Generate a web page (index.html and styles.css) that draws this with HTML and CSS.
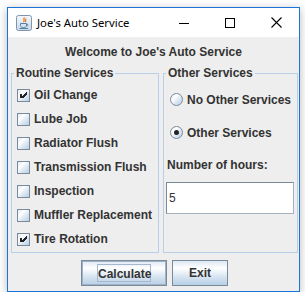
FILE: index.html
```html
<!DOCTYPE html>
<html lang="en">
<head>
    <meta charset="UTF-8">
    <title>Joe's Auto Service</title>
    <link rel="stylesheet" href="styles.css">
</head>
<body>
    <div class="window">
        <!-- Title bar -->
        <div class="titlebar">
            <svg class="app-icon" width="16" height="16" viewBox="0 0 16 16">
                <defs>
                    <linearGradient id="ig" x1="0" y1="0" x2="0" y2="1">
                        <stop offset="0" stop-color="#f4f8fc"/>
                        <stop offset="1" stop-color="#c9d8e8"/>
                    </linearGradient>
                </defs>
                <rect x="0.5" y="0.5" width="15" height="15" rx="2" fill="url(#ig)" stroke="#7f94ad"/>
                <path d="M8.5 2.5 C6.5 4 9.5 5 7.5 7 M10 3.5 C9 5 10.5 5.5 9.3 7" fill="none" stroke="#e76f00" stroke-width="1.1"/>
                <path d="M4.5 8.5 H10.5 V10.5 C10.5 12 9 12.5 7.5 12.5 C6 12.5 4.5 12 4.5 10.5 Z" fill="none" stroke="#5382a1" stroke-width="1"/>
                <path d="M10.5 9 C12.5 9 12.5 11 10.5 11" fill="none" stroke="#5382a1" stroke-width="0.9"/>
                <path d="M3.5 13.5 H12" stroke="#5382a1" stroke-width="1"/>
            </svg>
            <span class="title">Joe's Auto Service</span>
            <div class="caption-buttons">
                <div class="caption-btn">
                    <svg width="10" height="10" viewBox="0 0 10 10"><path d="M0 5.5 H10" stroke="#000" stroke-width="1"/></svg>
                </div>
                <div class="caption-btn">
                    <svg width="10" height="10" viewBox="0 0 10 10"><rect x="0.5" y="0.5" width="9" height="9" fill="none" stroke="#000" stroke-width="1"/></svg>
                </div>
                <div class="caption-btn">
                    <svg width="11" height="11" viewBox="0 0 11 11"><path d="M0.5 0.5 L10.5 10.5 M10.5 0.5 L0.5 10.5" stroke="#000" stroke-width="1.1"/></svg>
                </div>
            </div>
        </div>

        <!-- Frame content -->
        <div class="content">
            <div class="welcome">Welcome to Joe's Auto Service</div>

            <div class="panels">
                <fieldset class="group routine">
                    <legend>Routine Services</legend>
                    <div class="check-list">
                        <div class="check-row"><span class="box checked"><svg width="11" height="11" viewBox="0 0 11 11" shape-rendering="crispEdges"><rect x="2" y="4" width="2" height="4" fill="#222"/><polygon points="8,2 9,2 9,4 5,8 4,8 4,6" fill="#222"/></svg></span>Oil Change</div>
                        <div class="check-row"><span class="box"></span>Lube Job</div>
                        <div class="check-row"><span class="box"></span>Radiator Flush</div>
                        <div class="check-row"><span class="box"></span>Transmission Flush</div>
                        <div class="check-row"><span class="box"></span>Inspection</div>
                        <div class="check-row"><span class="box"></span>Muffler Replacement</div>
                        <div class="check-row"><span class="box checked"><svg width="11" height="11" viewBox="0 0 11 11" shape-rendering="crispEdges"><rect x="2" y="4" width="2" height="4" fill="#222"/><polygon points="8,2 9,2 9,4 5,8 4,8 4,6" fill="#222"/></svg></span>Tire Rotation</div>
                    </div>
                </fieldset>

                <fieldset class="group other">
                    <legend>Other Services</legend>
                    <div class="other-list">
                        <div class="radio-row"><span class="radio"></span>No Other Services</div>
                        <div class="radio-row"><span class="radio selected"></span>Other Services</div>
                        <div class="hours-label">Number of hours:</div>
                        <div class="field-row"><div class="text-field">5</div></div>
                    </div>
                </fieldset>
            </div>

            <div class="buttons">
                <button class="btn btn-calc"><span class="focus-ring">Calculate</span></button>
                <button class="btn btn-exit">Exit</button>
            </div>
        </div>
    </div>
</body>
</html>
```

FILE: styles.css
```css
body {
    margin: 0;
    background-color: #ffffff;
    font-family: "Liberation Sans", Arial, sans-serif;
}

/* Window frame */
.window {
    margin: 7px 0 0 7px;
    width: 293px;
    height: 285px;
    box-sizing: border-box;
    border: 1px solid #1c74d8;
    box-shadow: 0 2px 9px rgba(0, 0, 0, 0.28);
    display: flex;
    flex-direction: column;
    background-color: #eeeeee;
}

.titlebar {
    height: 29px;
    background-color: #ffffff;
    display: flex;
    align-items: center;
}

.app-icon {
    margin-left: 8px;
    margin-top: 1px;
}

.title {
    margin-left: 5px;
    font-family: "Noto Sans", sans-serif;
    font-size: 11.3px;
    color: #000000;
    flex: 1;
}

.caption-buttons {
    display: flex;
    height: 29px;
}

.caption-btn {
    width: 46px;
    height: 29px;
    display: flex;
    align-items: center;
    justify-content: center;
}

.caption-btn svg {
    display: block;
}

/* Swing content pane (Metal / Ocean) */
.content {
    flex: 1;
    display: flex;
    flex-direction: column;
    font-size: 12px;
    font-weight: bold;
    color: #333333;
}

.welcome {
    padding-top: 8px;
    line-height: 14px;
    text-align: center;
}

.panels {
    display: flex;
    margin-top: 7px;
    padding-left: 3px;
    gap: 4px;
}

.group {
    margin: 0;
    padding: 0;
    border: 1px solid #b8cfe5;
    height: 187px;
    box-sizing: border-box;
    min-width: 0;
}

.group legend {
    margin-left: 2px;
    padding: 0 2px;
    line-height: 14px;
}

.routine {
    width: 148px;
}

.other {
    width: 135px;
}

.check-list {
    padding: 3px 0 0 5px;
}

.check-row {
    height: 24px;
    line-height: 24px;
    display: flex;
    white-space: nowrap;
}

.box {
    width: 13px;
    height: 13px;
    box-sizing: border-box;
    margin-top: 6px;
    margin-right: 4px;
    border: 1px solid #7a8a99;
    background: linear-gradient(135deg, #dde8f3 0%, #ffffff 30%, #dde8f3 60%, #b8cfe5 100%);
}

.box svg {
    display: block;
}

.other-list {
    padding: 3px 0 0 2px;
}

.radio-row {
    height: 33px;
    display: flex;
    align-items: center;
    padding-left: 4px;
    white-space: nowrap;
}

.radio {
    width: 13px;
    height: 13px;
    box-sizing: border-box;
    margin-right: 4px;
    border: 1px solid #7a8a99;
    border-radius: 50%;
    background: linear-gradient(135deg, #dde8f3 0%, #ffffff 30%, #dde8f3 60%, #b8cfe5 100%);
    display: flex;
    align-items: center;
    justify-content: center;
}

.radio.selected::after {
    content: "";
    width: 5px;
    height: 5px;
    border-radius: 50%;
    background-color: #222222;
}

.hours-label {
    height: 33px;
    line-height: 33px;
    padding-left: 1px;
}

.field-row {
    height: 33px;
}

.text-field {
    width: 128px;
    height: 32px;
    box-sizing: border-box;
    border: 1px solid #7a8a99;
    border-right-color: #a6b2bd;
    border-bottom-color: #a6b2bd;
    background-color: #ffffff;
    font-weight: normal;
    line-height: 30px;
    padding-left: 2px;
    color: #333333;
}

/* Bottom buttons */
.buttons {
    display: flex;
    justify-content: center;
    gap: 5px;
    margin-top: 7px;
    padding-left: 2px;
}

.btn {
    height: 26px;
    box-sizing: border-box;
    border: 1px solid #7a8a99;
    padding: 0;
    font-family: "Liberation Sans", Arial, sans-serif;
    font-size: 12px;
    font-weight: bold;
    color: #333333;
    background: linear-gradient(#dde8f3 0%, #ffffff 30%, #dde8f3 60%, #b8cfe5 100%);
    display: flex;
    align-items: center;
    justify-content: center;
}

.btn-calc {
    width: 86px;
    box-shadow: inset 0 0 0 1px #9fb3c8;
}

.btn-exit {
    width: 56px;
}

.focus-ring {
    display: block;
    width: 54px;
    height: 18px;
    line-height: 18px;
    box-sizing: border-box;
    border: 1px solid #a3b8cc;
}
```
